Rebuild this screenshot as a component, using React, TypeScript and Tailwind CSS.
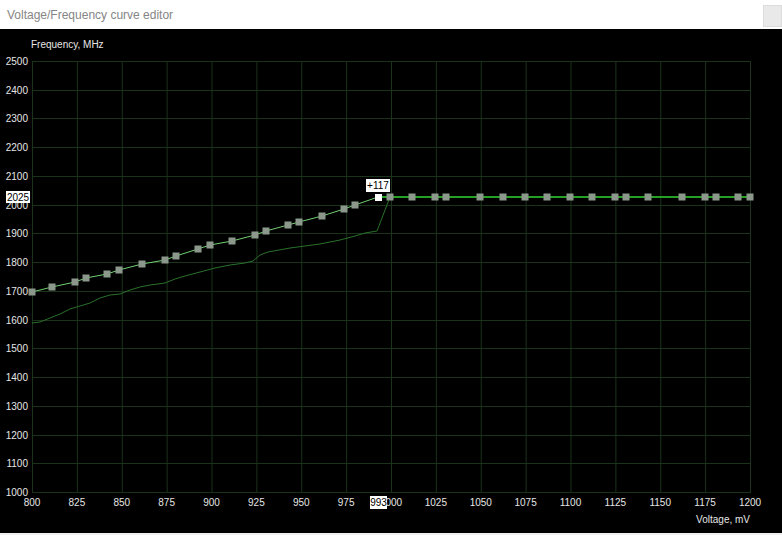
import React from "react"

const PLOT = { left: 32, right: 750, top: 61, bottom: 492 }
const vMin = 800
const vMax = 1200
const fMin = 1000
const fMax = 2500

const xOf = (mv: number) => PLOT.left + ((mv - vMin) / (vMax - vMin)) * (PLOT.right - PLOT.left)
const yOf = (mhz: number) => PLOT.bottom - ((mhz - fMin) / (fMax - fMin)) * (PLOT.bottom - PLOT.top)

const voltTicks = Array.from({ length: 17 }, (_, i) => vMin + i * 25)
const freqTicks = Array.from({ length: 16 }, (_, i) => fMin + i * 100)

// stock curve, drawn underneath
const baseCurve: [number, number][] = [
  [32, 323], [40, 322], [50, 318], [60, 314], [70, 309], [80, 306], [90, 303], [100, 298],
  [110, 295], [120, 294], [130, 290], [140, 287], [150, 285], [165, 283], [175, 279],
  [185, 276], [200, 272], [215, 268], [230, 265], [245, 263], [253, 261], [260, 255],
  [268, 252], [290, 248], [305, 246], [320, 244], [340, 240], [355, 236], [365, 233],
  [377, 231], [390, 197],
]

// edited curve points (the ramp up to the locked point)
const ramp: [number, number][] = [
  [32, 292], [52, 287], [75, 282], [86, 278], [107, 274], [119, 270], [142, 264], [165, 260],
  [176, 256], [198, 249], [210, 245], [232, 241], [255, 235], [266, 231], [288, 225],
  [299, 222], [322, 216], [344, 209], [355, 205], [378, 197],
]

const flatXs = [390, 412, 435, 446, 480, 503, 525, 547, 570, 592, 615, 626, 648, 682, 705, 716, 738, 750]
const flatY = 197

const toPath = (pts: [number, number][]) => pts.map(([x, y], i) => `${i ? "L" : "M"}${x} ${y}`).join(" ")

function CurveChart() {
  const font = "'Liberation Sans', Arial, sans-serif"
  return (
    <svg width={782} height={504} viewBox="0 29 782 504" className="block">
      {/* grid */}
      {voltTicks.map((v) => (
        <line key={`v${v}`} x1={xOf(v) + 0.5} x2={xOf(v) + 0.5} y1={PLOT.top} y2={PLOT.bottom} stroke="#1b321b" />
      ))}
      {freqTicks.map((f) => (
        <line key={`f${f}`} x1={PLOT.left} x2={PLOT.right + 1} y1={Math.round(yOf(f)) + 0.5} y2={Math.round(yOf(f)) + 0.5} stroke="#1b321b" />
      ))}

      {/* axis labels */}
      <g fontFamily={font} fontSize={10} fill="#e6e6e6">
        <text x={31} y={48}>Frequency, MHz</text>
        {freqTicks.map((f) => (
          <text key={f} x={28} y={yOf(f) + 4} textAnchor="end">{f}</text>
        ))}
        {voltTicks.map((v) => (
          <text key={v} x={xOf(v)} y={506} textAnchor="middle">{v}</text>
        ))}
        <text x={750} y={523} textAnchor="end">Voltage, mV</text>
      </g>

      {/* curves */}
      <path d={toPath(baseCurve)} fill="none" stroke="#2a702a" strokeWidth={1} />
      <path d={toPath(ramp)} fill="none" stroke="#72d072" strokeWidth={1} />
      <line x1={378} x2={750} y1={flatY} y2={flatY} stroke="#24a024" strokeWidth={2} />

      {ramp.slice(0, -1).map(([x, y]) => (
        <rect key={`r${x}`} x={x - 3.5} y={y - 3.5} width={7} height={7} fill="#8b988b" />
      ))}
      {flatXs.map((x) => (
        <rect key={`p${x}`} x={x - 3.5} y={flatY - 3.5} width={7} height={7} fill="#8b988b" />
      ))}
      <rect x={375} y={194} width={7} height={7} fill="#ffffff" />

      {/* cursor readouts */}
      <g fontFamily={font} fontSize={10} fill="#000">
        <rect x={366} y={179} width={24} height={13} fill="#fff" />
        <text x={378} y={189} textAnchor="middle">+117</text>
        <rect x={6} y={191} width={24} height={12} fill="#fff" />
        <text x={18} y={201} textAnchor="middle">2025</text>
        <rect x={370} y={496} width={17} height={13} fill="#fff" />
        <text x={378.5} y={506} textAnchor="middle">993</text>
      </g>
    </svg>
  )
}

export default function App() {
  return (
    <div className="w-[782px] h-[535px] flex flex-col bg-white overflow-hidden">
      {/* window title */}
      <div className="h-[29px] flex items-center justify-between pl-[7px] bg-white">
        <span className="text-[12px] text-[#858585] font-['Liberation_Sans',Arial,sans-serif]">Voltage/Frequency curve editor</span>
        <div className="w-[19px] h-[22px] mt-[2px] border border-[#dcdcdc] bg-[#e9e9e9]" />
      </div>
      <div className="h-[504px] bg-black">
        <CurveChart />
      </div>
      <div className="flex-1 bg-[#f0f0f0]" />
    </div>
  )
}
